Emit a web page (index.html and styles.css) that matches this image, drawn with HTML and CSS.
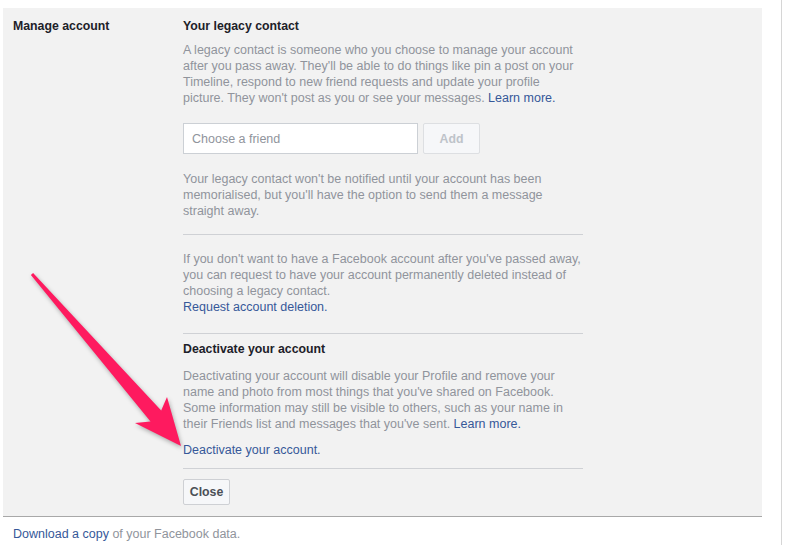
FILE: index.html
```html
<!DOCTYPE html>
<html lang="en">
<head>
    <meta charset="UTF-8">
    <title>Manage account</title>
    <link rel="stylesheet" href="styles.css">
</head>
<body>
    <div class="page">
        <div class="panel">
            <div class="label">Manage account</div>

            <div class="content">
                <div class="section section-legacy">
                    <h3>Your legacy contact</h3>
                    <p>A legacy contact is someone who you choose to manage your account after you pass away. They'll be able to do things like pin a post on your Timeline, respond to new friend requests and update your profile picture. They won't post as you or see your messages. <a href="#">Learn more.</a></p>

                    <div class="friend-row">
                        <input type="text" class="friend-input" placeholder="Choose a friend">
                        <button class="btn btn-disabled">Add</button>
                    </div>

                    <p>Your legacy contact won't be notified until your account has been memorialised, but you'll have the option to send them a message straight away.</p>
                </div>

                <div class="section section-plain">
                    <p>If you don't want to have a Facebook account after you've passed away, you can request to have your account permanently deleted instead of choosing a legacy contact.<br><a href="#">Request account deletion.</a></p>
                </div>

                <div class="section section-deactivate">
                    <h3>Deactivate your account</h3>
                    <p>Deactivating your account will disable your Profile and remove your name and photo from most things that you've shared on Facebook. Some information may still be visible to others, such as your name in their Friends list and messages that you've sent. <a href="#">Learn more.</a></p>
                    <p class="action"><a href="#">Deactivate your account.</a></p>
                </div>

                <div class="actions">
                    <button class="btn">Close</button>
                </div>
            </div>
        </div>

        <div class="footer"><a href="#">Download a copy</a> of your Facebook data.</div>

        <!-- annotation arrow -->
        <svg class="arrow" width="200" height="460" viewBox="0 0 200 460">
            <polygon points="30.9,275 150.5,421.5 135,423 181,446 167,397 161.2,410.5 33.1,273"/>
        </svg>
    </div>
</body>
</html>
```

FILE: styles.css
```css
body {
    margin: 0;
    font-family: Helvetica, "Liberation Sans", Arial, sans-serif;
    font-size: 12.5px;
    line-height: 16px;
    color: #1d2129;
    background-color: white;
}

a {
    color: #365899;
    text-decoration: none;
}

.page {
    position: relative;
    width: 782px;
    min-height: 545px;
    border-right: 1px solid #d6d6d6;
    padding-top: 8px;
    box-sizing: border-box;
}

.panel {
    display: flex;
    width: 759px;
    margin-left: 3px;
    background-color: #f2f2f2;
    border-bottom: 1px solid #a8a8a8;
    padding: 10px 0 11px;
    box-sizing: border-box;
}

.label {
    width: 180px;
    padding-left: 10px;
    box-sizing: border-box;
    font-size: 12.3px;
    font-weight: bold;
    flex-shrink: 0;
}

.content {
    width: 400px;
}

.section {
    border-bottom: 1px solid #cfd1d5;
}

.section-legacy {
    padding-bottom: 15px;
}

.section-plain {
    padding-top: 16px;
    padding-bottom: 18px;
}

.section-deactivate {
    padding-top: 7px;
    padding-bottom: 10px;
}

.section-deactivate h3 {
    margin-bottom: 11px;
}

h3 {
    margin: 0 0 8px;
    font-size: 12.3px;
    line-height: 16px;
    font-weight: bold;
    color: #1d2129;
}

p {
    margin: 0;
    color: #90949c;
    line-height: 16px;
}

.friend-row {
    display: flex;
    gap: 5px;
    margin: 17px 0 17px;
}

.friend-input {
    width: 235px;
    height: 31px;
    padding: 0 8px;
    border: 1px solid #ccd0d5;
    background-color: white;
    font-family: inherit;
    font-size: 12.5px;
    color: #1d2129;
    box-sizing: border-box;
    outline: none;
}

.friend-input::placeholder {
    color: #90949c;
}

.btn {
    height: 26px;
    padding: 0 8px;
    border: 1px solid #ced0d4;
    border-radius: 2px;
    background-color: #f6f7f9;
    color: #4b4f56;
    font-family: inherit;
    font-size: 12.3px;
    font-weight: bold;
    box-sizing: border-box;
    cursor: pointer;
}

.btn-disabled {
    width: 57px;
    height: 31px;
    border-color: #dddfe2;
    color: #bec3c9;
    cursor: default;
}

.action {
    margin-top: 10px;
}

.actions {
    display: flex;
    padding-top: 10px;
}

.actions .btn {
    width: 47px;
    padding: 0;
}

.footer {
    padding: 9px 0 0 13px;
    color: #90949c;
}

.arrow {
    position: absolute;
    left: 0;
    top: 0;
    overflow: visible;
    filter: drop-shadow(1px 2px 2px rgba(0, 0, 0, 0.3));
}

.arrow polygon {
    fill: #fe1a5f;
}
```
